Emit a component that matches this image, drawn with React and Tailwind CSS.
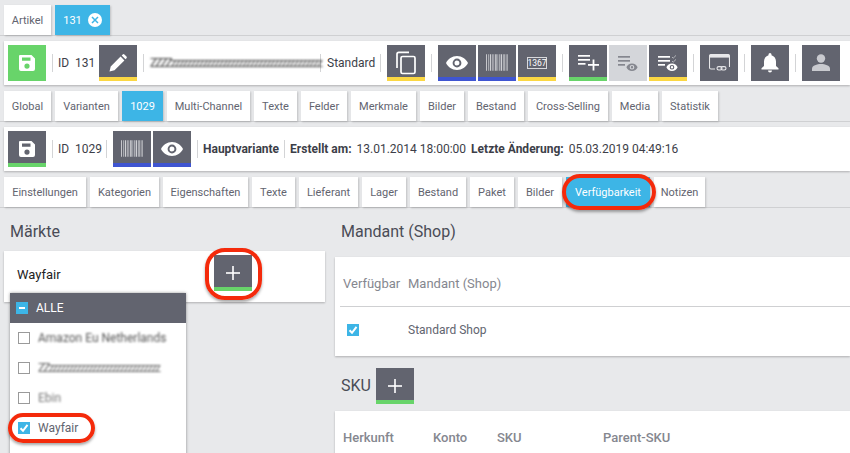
import React from "react";

const Save = ({ c = "#fff" }) => (
  <svg width="20" height="20" viewBox="0 0 20 20">
    <path fillRule="evenodd" fill={c} d="M3 2h11.500L18 5.500V16a2 2 0 0 1-2 2H4a2 2 0 0 1-2-2V3a1 1 0 0 1 1-1zM5 4.500v3.200h8.500V4.500zM10 10.500a2.600 2.600 0 1 0 0 5.200 2.600 2.600 0 0 0 0-5.200z" />
  </svg>
);
const Pencil = () => (
  <svg width="20" height="20" viewBox="0 0 20 20" fill="#fff">
    <path d="M1.500 18.500l1.200-5L12.600 3.600l3.800 3.800-9.900 9.900zM13.700 2.500l1-1a1.200 1.200 0 0 1 1.700 0l2.100 2.100a1.200 1.200 0 0 1 0 1.700l-1 1z" />
  </svg>
);
const Copy = () => (
  <svg width="22" height="24" viewBox="0 0 22 24" fill="none" stroke="#fff" strokeWidth="1.700">
    <path d="M2 17V3.200A1.800 1.800 0 0 1 3.800 1.400H14" />
    <rect x="6" y="5.500" width="14" height="17" rx="1.500" />
  </svg>
);
const Eye = () => (
  <svg width="22" height="14" viewBox="0 0 22 14">
    <path fillRule="evenodd" fill="#fff" d="M11 0C6 0 2 3 0 7c2 4 6 7 11 7s9-3 11-7c-2-4-6-7-11-7zm0 2.600a4.400 4.400 0 1 1 0 8.800 4.400 4.400 0 0 1 0-8.800zm0 1.900a2.500 2.500 0 1 0 0 5 2.500 2.500 0 0 0 0-5z" />
  </svg>
);
const Barcode = () => (
  <svg width="22" height="17" viewBox="0 0 24 18" fill="#cfd0d4">
    {[[0,1],[2.500,.7],[4.200,1.400],[6.500,.7],[8.200,.7],[10,1.600],[12.600,.7],[14.400,.7],[16,1.600],[18.600,.7],[20,1],[22.400,1.200]].map(([x,w],i)=>(
      <rect key={i} x={x} y="0" width={w} height="18" />
    ))}
  </svg>
);
const Num = () => (
  <svg width="20" height="12" viewBox="0 0 20 12">
    <rect x=".5" y=".5" width="19" height="11" fill="none" stroke="#d8d9dc" strokeWidth="1" />
    <text x="10" y="9" textAnchor="middle" fill="#fff" fontSize="8.500" fontFamily="Roboto, sans-serif">1367</text>
  </svg>
);
const ListPlus = () => (
  <svg width="21" height="16" viewBox="0 0 21 16" fill="#fff">
    <rect x="0" y="0" width="12" height="1.700"/><rect x="0" y="4" width="12" height="1.700"/><rect x="0" y="8" width="7.500" height="1.700"/>
    <rect x="10" y="9" width="11" height="1.800"/><rect x="14.600" y="4.500" width="1.800" height="11"/>
  </svg>
);
const ListEye = ({ c = "#fff", check }) => (
  <svg width="20" height="18" viewBox="0 0 20 18" fill={c}>
    <rect x="0" y="2" width="12" height="1.700"/><rect x="0" y="6" width="12" height="1.700"/><rect x="0" y="10" width="7" height="1.700"/>
    {check && <path d="M14 3l1.200 1.200L18 1.400" fill="none" stroke="#c9cace" strokeWidth=".8"/>}
    {check && <path d="M14 7l1.200 1.200L18 5.400" fill="none" stroke="#c9cace" strokeWidth=".8"/>}
    <path fillRule="evenodd" d="M14 9.500c-2.600 0-4.700 1.600-5.600 3.700.9 2.100 3 3.700 5.600 3.700s4.700-1.600 5.600-3.700c-.9-2.100-3-3.700-5.600-3.700zm0 1.400a2.300 2.300 0 1 1 0 4.600 2.300 2.300 0 0 1 0-4.600zm0 1.100a1.200 1.200 0 1 0 0 2.400 1.200 1.200 0 0 0 0-2.400z" />
  </svg>
);
const WindowLink = () => (
  <svg width="21" height="17" viewBox="0 0 21 17" fill="none" stroke="#e8e8ea" strokeWidth="1.100">
    <path d="M6 15H2a1.500 1.500 0 0 1-1.500-1.500V2A1.500 1.500 0 0 1 2 .5h17A1.500 1.500 0 0 1 20.500 2v11" />
    <rect x="1" y="1" width="19" height="2.600" fill="#e8e8ea" stroke="none" />
    <rect x="8" y="12.600" width="5" height="3.400" rx="1.700" />
    <rect x="12" y="12.600" width="5" height="3.400" rx="1.700" />
  </svg>
);
const Bell = () => (
  <svg width="18" height="20" viewBox="0 0 18 20" fill="#fff">
    <path d="M9 0a1.500 1.500 0 0 1 1.500 1.500v.7C13.300 3 15 5.500 15 8.500V13l2.500 2.300V16.500H.5v-1.200L3 13V8.500c0-3 1.700-5.500 4.500-6.300v-.7A1.500 1.500 0 0 1 9 0zM7 17.500h4a2 2 0 0 1-4 0z" />
  </svg>
);
const Person = () => (
  <svg width="18" height="17" viewBox="0 0 18 17" fill="#c9cacf">
    <circle cx="9" cy="4.500" r="4.200" /><path d="M0 17v-2.500C0 11.500 5 10 9 10s9 1.500 9 4.500V17z" />
  </svg>
);
const Plus = () => (
  <svg width="14" height="14" viewBox="0 0 14 14" fill="#fff">
    <rect x="6.200" y="0" width="1.600" height="14" /><rect x="0" y="6.200" width="14" height="1.600" />
  </svg>
);
const Tick = () => (
  <svg width="12" height="12" viewBox="0 0 12 12">
    <path d="M2.500 6.200l2.500 2.600 4.500-6" fill="none" stroke="#fff" strokeWidth="2" />
  </svg>
);

const Btn = ({ u, bg = "bg-[#62646f]", children }) => (
  <div className={`relative w-[38px] h-[36px] shrink-0 flex items-center justify-center ${bg}`}>
    <div className="-mt-[1px]">{children}</div>
    {u && <div className={`absolute left-0 right-0 bottom-0 h-[4px] ${u}`} />}
  </div>
);
const Sep = ({ m = "mx-[6px]" }) => <div className={`w-[1px] h-[18px] bg-[#d3d4d6] shrink-0 ${m}`} />;
const Y = "bg-[#fbd743]", B = "bg-[#3f55d1]", G = "bg-[#68d46a]";

const Tab = ({ w, active, children }) => (
  <div style={{ width: w }} className={`h-[30px] text-[11px] flex items-center justify-center shrink-0 shadow-[1px_1px_2px_rgba(0,0,0,0.18)] ${active ? "bg-[#3db5e6] text-white" : "bg-white text-[#62646f]"}`}>
    {children}
  </div>
);
const Tabs = ({ items }) => (
  <div className="flex gap-[4px] pl-[4px] h-[31px] border-b border-[#cfd0d2]">
    {items.map(([t, w, a]) => <Tab key={t + w} w={w} active={a}>{t}</Tab>)}
  </div>
);
const Bar = ({ children }) => (
  <div className="ml-[4px] h-[44px] bg-white flex items-center pl-[4px] text-[#3c3e48] shadow-[0_1px_2px_rgba(0,0,0,0.25)]">{children}</div>
);
const Empty = () => <span className="w-[12px] h-[12px] border border-[#9a9a9a] bg-white shrink-0" />;
const Checked = () => <span className="w-[12px] h-[12px] bg-[#3db5e6] shrink-0 flex items-center justify-center"><Tick /></span>;
const Row = ({ box, children }) => (
  <div className="h-[30px] flex items-center pl-[8px] gap-[8px] text-[#62646f]">{box}{children}</div>
);
const Ring = ({ className }) => (
  <div className={`absolute border-[4px] border-[#f42a0b] shadow-[0_2px_3px_rgba(0,0,0,0.35)] pointer-events-none ${className}`} />
);

export default function App() {
  return (
    <div className="relative w-[850px] h-[453px] overflow-hidden bg-[#e8e9eb] text-[12px] leading-none" style={{ fontFamily: "Roboto, sans-serif" }}>
      <div className="h-[5px]" />
      <div className="flex gap-[4px] pl-[4px] h-[31px] border-b border-[#cfd0d2]">
        <Tab w={47}>Artikel</Tab>
        <Tab w={55} active>
          <span className="mr-[6px]">131</span>
          <span className="w-[14px] h-[14px] rounded-full bg-white flex items-center justify-center">
            <svg width="8" height="8" viewBox="0 0 8 8"><path d="M1 1l6 6M7 1l-6 6" stroke="#3db5e6" strokeWidth="1.500" /></svg>
          </span>
        </Tab>
      </div>
      <div className="h-[5px]" />
      <Bar>
        <Btn bg="bg-[#68d46a]"><Save /></Btn>
        <Sep m="ml-[6px] mr-[5px]" />
        <span className="w-[35px] whitespace-nowrap">ID&nbsp; 131</span>
        <div className="w-[6px]" />
        <Btn u={Y}><Pencil /></Btn>
        <Sep />
        <div className="w-[164px] whitespace-nowrap blur-[1.200px] text-[#444] tracking-[-2px]">ZZZZzzzzzzzzzzzzzzzzzzzzzzzzzzzzzzzzzzzzzz</div>
        <Sep />
        <span className="w-[47px] whitespace-nowrap">Standard</span>
        <Sep />
        <Btn u={Y}><Copy /></Btn>
        <Sep />
        <Btn u={B}><Eye /></Btn>
        <div className="w-[2px]" />
        <Btn u={B}><Barcode /></Btn>
        <div className="w-[2px]" />
        <Btn u={Y}><Num /></Btn>
        <Sep />
        <Btn u={G}><ListPlus /></Btn>
        <div className="w-[2px]" />
        <Btn bg="bg-[#d4d6da]"><ListEye c="#85878f" /></Btn>
        <div className="w-[2px]" />
        <Btn u={Y}><ListEye check /></Btn>
        <Sep />
        <Btn><WindowLink /></Btn>
        <Sep />
        <Btn><Bell /></Btn>
        <Sep />
        <Btn><Person /></Btn>
      </Bar>
      <div className="h-[6px]" />
      <Tabs items={[["Global",47],["Varianten",63],["1029",41,true],["Multi-Channel",83],["Texte",43],["Felder",46],["Merkmale",65],["Bilder",44],["Bestand",56],["Cross-Selling",80],["Media",46],["Statistik",56]]} />
      <div className="h-[5px]" />
      <Bar>
        <Btn u={G}><Save /></Btn>
        <Sep m="ml-[6px] mr-[5px]" />
        <span className="w-[42px] whitespace-nowrap">ID&nbsp; 1029</span>
        <Sep />
        <Btn u={B}><Barcode /></Btn>
        <div className="w-[2px]" />
        <Btn u={B}><Eye /></Btn>
        <Sep m="ml-[6px] mr-[5px]" />
        <b className="font-bold whitespace-nowrap">Hauptvariante</b>
        <Sep m="mx-[5px]" />
        <b className="font-bold whitespace-nowrap">Erstellt am:</b>
        <span className="ml-[5px] whitespace-nowrap">13.01.2014 18:00:00</span>
        <b className="ml-[5px] font-bold whitespace-nowrap">Letzte Änderung:</b>
        <span className="ml-[5px] whitespace-nowrap">05.03.2019 04:49:16</span>
      </Bar>
      <div className="h-[6px]" />
      <Tabs items={[["Einstellungen",82],["Kategorien",69],["Eigenschaften",85],["Texte",43],["Lieferant",59],["Lager",44],["Bestand",56],["Paket",44],["Bilder",44],["Verfügbarkeit",84,true],["Notizen",51]]} />

      <div className="flex gap-[10px] pl-[4px]">
        <div className="w-[321px] shrink-0">
          <h2 className="h-[43px] pl-[6px] pt-[16px] text-[16px] leading-[16px] text-[#4a4c56]">Märkte</h2>
          <div className="h-[51px] bg-white pl-[13px] flex items-center gap-[160px] shadow-[0_1px_2px_rgba(0,0,0,0.25)]">
            <span className="w-[37px] text-[13px] text-[#222] -mt-[5px]">Wayfair</span>
            <div className="-mt-[7px]"><Btn u={G}><Plus /></Btn></div>
          </div>
        </div>
        <div className="flex-1">
          <h2 className="h-[49px] pl-[6px] pt-[16px] text-[16px] leading-[16px] text-[#4a4c56]">Mandant (Shop)</h2>
          <div className="h-[99px] bg-white shadow-[0_1px_2px_rgba(0,0,0,0.25)] pl-[5px]">
            <div className="h-[50px] pt-[3px] flex items-center border-b border-[#cfd0d2] text-[13px] text-[#85878f]">
              <span className="w-[68px] pl-[3px]">Verfügbar</span>
              <span>Mandant (Shop)</span>
            </div>
            <div className="h-[45px] flex items-center text-[#62646f]">
              <div className="w-[68px] pl-[7px]"><Checked /></div>
              <span>Standard Shop</span>
            </div>
          </div>
          <div className="h-[36px] mt-[12px] flex items-center pl-[6px] gap-[6px] mb-[7px]">
            <span className="text-[16px] text-[#4a4c56] w-[29px]">SKU</span>
            <Btn u={G}><Plus /></Btn>
          </div>
          <div className="h-[60px] bg-white shadow-[0_1px_2px_rgba(0,0,0,0.25)] pl-[8px] pt-[20px] flex text-[13px] text-[#85878f] font-medium">
            <span className="w-[90px]">Herkunft</span>
            <span className="w-[64px]">Konto</span>
            <span className="w-[106px]">SKU</span>
            <span>Parent-SKU</span>
          </div>
        </div>
      </div>

      {/* Dropdown menu over the card */}
      <div className="absolute left-[10px] top-[293px] w-[176px] h-[170px] bg-white shadow-[0_0_3px_rgba(0,0,0,0.4)]">
        <div className="h-[30px] bg-[#62646f] text-white flex items-center pl-[6px] gap-[8px]">
          <span className="w-[12px] h-[12px] bg-[#3db5e6] flex items-center justify-center"><span className="w-[6px] h-[2px] bg-white" /></span>
          ALLE
        </div>
        <Row box={<Empty />}><span className="blur-[1px] text-[#555] whitespace-nowrap">Amazon Eu Netherlands</span></Row>
        <Row box={<Empty />}><span className="blur-[1.200px] text-[#666] tracking-[-2px] whitespace-nowrap">ZZzzzzzzzzzzzzzzzzzzzzzzzzzzzz</span></Row>
        <Row box={<Empty />}><span className="blur-[0.800px] text-[#777]">Ebin</span></Row>
        <Row box={<Checked />}>Wayfair</Row>
      </div>

      {/* Red annotation marks */}
      <Ring className="left-[562px] top-[174px] w-[94px] h-[36px] rounded-[18px]" />
      <Ring className="left-[205px] top-[248px] w-[57px] h-[52px] rounded-[20px]" />
      <Ring className="left-[8px] top-[413px] w-[87px] h-[30px] rounded-[15px]" />
    </div>
  );
}
